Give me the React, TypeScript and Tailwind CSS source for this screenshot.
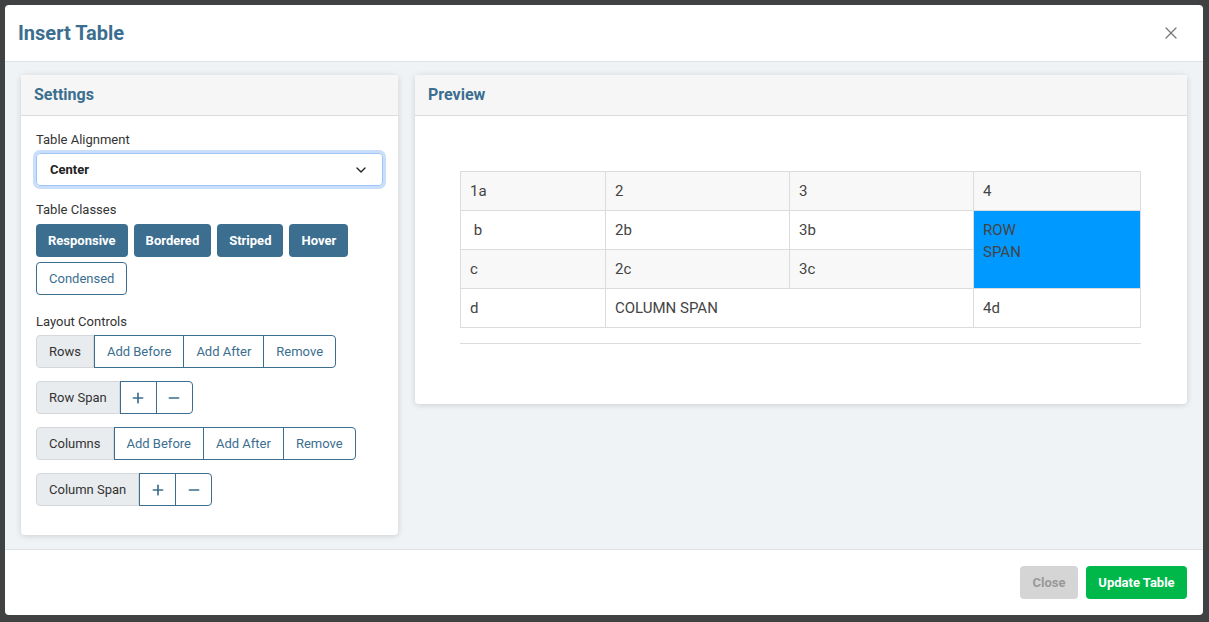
import { ChevronDown, X, Plus, Minus } from "lucide-react"

const font = { fontFamily: "Roboto, 'Liberation Sans', sans-serif" }

function Group({ label, items, plusMinus }: { label: string; items?: string[]; plusMinus?: boolean }) {
  return (
    <div className="flex h-[33px] text-[13px]">
      <div className="flex items-center rounded-l border border-[#d4d8dc] bg-[#e9ecef] px-[12px] text-[#333]">{label}</div>
      {plusMinus ? (
        <>
          <button className="flex w-[37px] items-center justify-center border border-[#3b6e8f] text-[#3b6e8f]"><Plus className="h-4 w-4" strokeWidth={2.5} /></button>
          <button className="-ml-px flex w-[37px] items-center justify-center rounded-r border border-[#3b6e8f] text-[#3b6e8f]"><Minus className="h-4 w-4" strokeWidth={2.5} /></button>
        </>
      ) : (
        items!.map((t, i) => (
          <button
            key={t}
            className={`${i > 0 ? "-ml-px" : ""} ${i === items!.length - 1 ? "rounded-r" : ""} flex items-center border border-[#3b6e8f] px-[12px] text-[#3b6e8f]`}
          >
            {t}
          </button>
        ))
      )}
    </div>
  )
}

export default function App() {
  const cell = "border border-[#dcdcdc] px-[9px]"
  return (
    <div className="h-[622px] w-[1209px] bg-[#404142] pt-[5px] pl-[5px]" style={font}>
      <div className="flex h-[610px] w-[1198px] flex-col overflow-hidden rounded bg-white">
        <div className="flex h-[57px] items-center justify-between border-b border-[#dde2e6] pl-[13px] pr-[22px]">
          <h1 className="text-[20px] font-bold text-[#3b6e8f]">Insert Table</h1>
          <X className="h-5 w-5 text-[#777]" strokeWidth={1.5} />
        </div>
        <div className="flex flex-1 items-start gap-[17px] bg-[#eff3f6] px-[16px] pt-[13px]">
          <div className="h-[460px] w-[377px] rounded bg-white shadow-[0_1px_6px_rgba(0,0,0,0.15)]">
            <div className="flex h-[41px] items-center border-b border-[#dcdcdc] bg-[#f6f6f6] px-[13px] text-[16px] font-bold text-[#3b6e8f]">Settings</div>
            <div className="px-[15px] pt-[16px]">
              <div className="text-[13px] leading-[16px] text-[#333]">Table Alignment</div>
              <div className="mt-[5px] flex h-[33px] items-center justify-between rounded border border-[#9ec5f5] px-[13px] text-[13px] font-bold text-[#222] ring-[3px] ring-[#c9defb]">
                Center
                <ChevronDown className="h-4 w-4" strokeWidth={2} />
              </div>
              <div className="mt-[16px] text-[13px] leading-[16px] text-[#333]">Table Classes</div>
              <div className="mt-[6px] flex flex-wrap gap-x-[6px] gap-y-[5px] text-[13px] font-bold">
                {["Responsive", "Bordered", "Striped", "Hover"].map(t => (
                  <button key={t} className="h-[33px] rounded bg-[#3b6e8f] px-[12px] text-white">{t}</button>
                ))}
                <button className="h-[33px] rounded border border-[#3b6e8f] px-[12px] font-normal text-[#3b6e8f]">Condensed</button>
              </div>
              <div className="mt-[19px] text-[13px] leading-[16px] text-[#333]">Layout Controls</div>
              <div className="mt-[5px] flex flex-col gap-[13px]">
                <Group label="Rows" items={["Add Before", "Add After", "Remove"]} />
                <Group label="Row Span" plusMinus />
                <Group label="Columns" items={["Add Before", "Add After", "Remove"]} />
                <Group label="Column Span" plusMinus />
              </div>
            </div>
          </div>
          <div className="h-[329px] flex-1 rounded bg-white shadow-[0_1px_6px_rgba(0,0,0,0.15)]">
            <div className="flex h-[41px] items-center border-b border-[#dcdcdc] bg-[#f6f6f6] px-[13px] text-[16px] font-bold text-[#3b6e8f]">Preview</div>
            <div className="px-[45px] pt-[55px]">
              <div className="w-[681px] border-b border-[#dcdcdc] pb-[15px]">
                <table className="w-[681px] border-collapse text-[15px] text-[#444]">
                  <tbody>
                    <tr className="h-[39px] bg-[#f8f8f8]">
                      <td className={`${cell} w-[145px] align-middle`}>1a</td>
                      <td className={`${cell} w-[184px] align-middle`}>2</td>
                      <td className={`${cell} w-[184px] align-middle`}>3</td>
                      <td className={`${cell} align-middle`}>4</td>
                    </tr>
                    <tr className="h-[39px]">
                      <td className={`${cell} align-middle`}>&nbsp;b</td>
                      <td className={`${cell} align-middle`}>2b</td>
                      <td className={`${cell} align-middle`}>3b</td>
                      <td rowSpan={2} className={`${cell} bg-[#0099ff] pt-[8px] align-top leading-[22px]`}>ROW<br />SPAN</td>
                    </tr>
                    <tr className="h-[39px] bg-[#f8f8f8]">
                      <td className={`${cell} align-middle`}>c</td>
                      <td className={`${cell} align-middle`}>2c</td>
                      <td className={`${cell} align-middle`}>3c</td>
                    </tr>
                    <tr className="h-[39px]">
                      <td className={`${cell} align-middle`}>d</td>
                      <td colSpan={2} className={`${cell} align-middle`}>COLUMN SPAN</td>
                      <td className={`${cell} align-middle`}>4d</td>
                    </tr>
                  </tbody>
                </table>
              </div>
            </div>
          </div>
        </div>
        <div className="flex h-[66px] items-center justify-end gap-[8px] border-t border-[#dde2e6] pr-[16px] text-[13px] font-bold">
          <button className="h-[33px] w-[58px] rounded bg-[#d5d5d5] text-[#999]">Close</button>
          <button className="h-[33px] w-[101px] rounded bg-[#00b74a] text-white">Update Table</button>
        </div>
      </div>
    </div>
  )
}
